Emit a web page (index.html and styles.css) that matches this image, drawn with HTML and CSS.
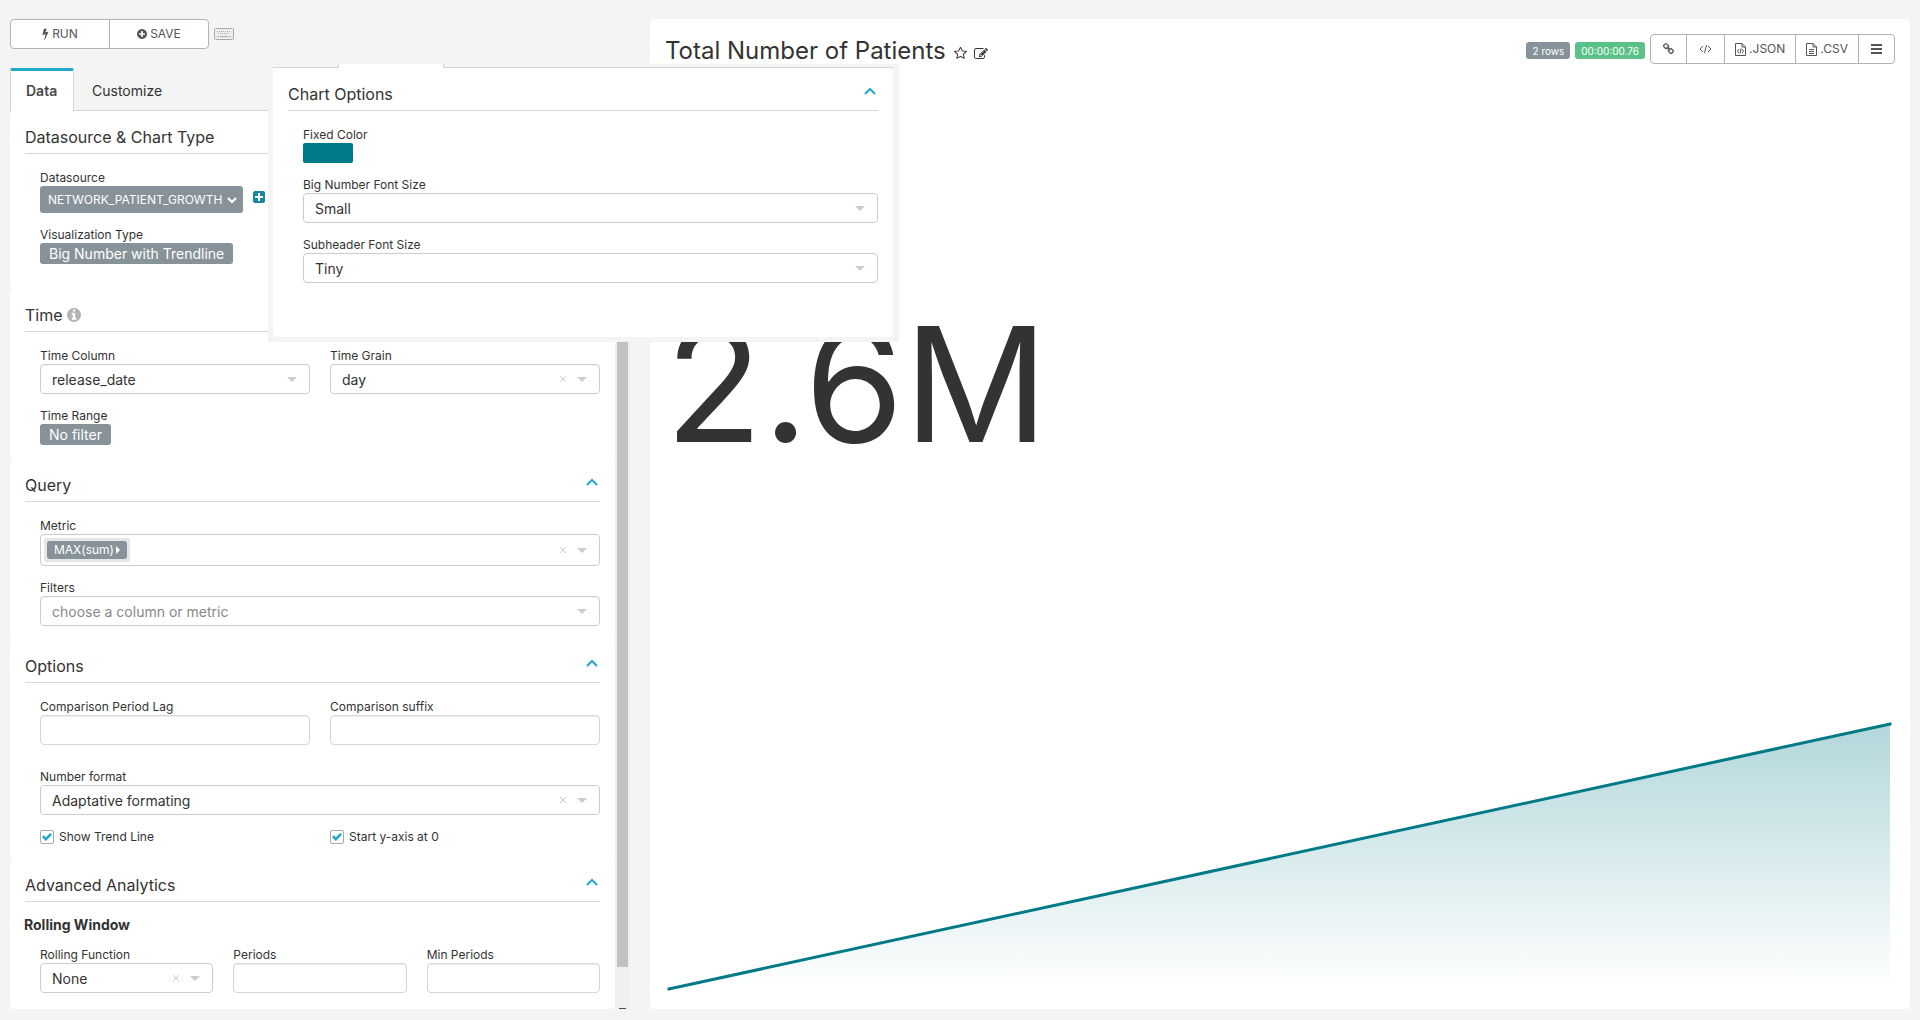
FILE: index.html
```html
<!DOCTYPE html>
<html lang="en">
<head>
<meta charset="utf-8">
<title>Total Number of Patients</title>
<link rel="stylesheet" href="styles.css">
</head>
<body>
<svg class="sprite" aria-hidden="true">
  <symbol id="i-up" viewBox="0 0 12 8"><path d="M1 7l5-5 5 5" fill="none" stroke="currentColor" stroke-width="2"/></symbol>
  <symbol id="i-x" viewBox="0 0 8 8"><path d="M1 1l6 6M7 1l-6 6" fill="none" stroke="currentColor" stroke-width="1"/></symbol>
</svg>
<div class="explore">
  <aside class="side">
    <div class="actions">
      <div class="btn-group">
        <button class="btn btn-wide" type="button"><svg width="7" height="12" viewBox="384 0 1024 1792"><path d="M1333 566q18 20 7 44l-540 1157q-13 25-42 25-4 0-14-2-17-5-25.500-19t-4.500-30l197-808-406 101q-4 1-12 1-18 0-31-11-18-15-13-39l201-825q4-14 16-23t28-9h328q19 0 32 12.500t13 29.500q0 8-5 18l-171 463 396-98q8-2 12-2 19 0 34 15z"/></svg>RUN</button>
        <button class="btn btn-wide" type="button"><svg width="10" height="12" viewBox="128 128 1536 1536"><path d="M1344 960v-128q0-26-19-45t-45-19h-256v-256q0-26-19-45t-45-19h-128q-26 0-45 19t-19 45v256h-256q-26 0-45 19t-19 45v128q0 26 19 45t45 19h256v256q0 26 19 45t45 19h128q26 0 45-19t19-45v-256h256q26 0 45-19t19-45zm320-64q0 209-103 385.500t-279.500 279.500-385.500 103-385.500-103-279.500-279.500-103-385.500 103-385.500 279.500-279.500 385.500-103 385.500 103 279.500 279.500 103 385.500z"/></svg>SAVE</button>
      </div>
      <svg class="keyboard" width="20" height="12" viewBox="0 0 20 12" aria-label="Keyboard shortcuts"><rect x=".5" y=".5" width="19" height="11" rx="1" fill="#eee" stroke="#aaa"/><path d="M3 3.500h14M4 5.500h12" stroke="#aaa" stroke-dasharray="1 1"/><path d="M3 8.500h2M6 8.500h8M15 8.500h2" stroke="#aaa"/></svg>
    </div>
    <nav class="tabs">
      <a class="tab active" href="#data">Data</a>
      <a class="tab" href="#customize">Customize</a>
    </nav>
    <div class="scroller">
      <form class="panels">
        <section class="panel panel-source">
          <header class="panel-head"><h2>Datasource &amp; Chart Type</h2></header>
          <div class="fields">
            <div class="field">
              <span class="label">Datasource</span>
              <div class="source-row">
                <button class="chip chip-source" type="button">NETWORK_PATIENT_GROWTH<svg width="10" height="8" viewBox="0 0 10 8"><path d="M1 2l4 4 4-4" fill="none" stroke="#fff" stroke-width="2.200"/></svg></button>
                <button class="plus" type="button" aria-label="Expand datasource"><svg width="12" height="12" viewBox="0 0 12 12"><rect width="12" height="12" rx="2" fill="#1a85a0"/><path d="M6 2v8M2 6h8" stroke="#fff" stroke-width="2"/></svg></button>
              </div>
            </div>
            <div class="field">
              <span class="label">Visualization Type</span>
              <button class="chip" type="button">Big Number with Trendline</button>
            </div>
          </div>
        </section>

        <section class="panel">
          <header class="panel-head"><h2>Time</h2><svg class="info" viewBox="128 128 1536 1536"><path d="M1152 1376v-160q0-14-9-23t-23-9h-96v-512q0-14-9-23t-23-9h-320q-14 0-23 9t-9 23v160q0 14 9 23t23 9h96v320h-96q-14 0-23 9t-9 23v160q0 14 9 23t23 9h448q14 0 23-9t9-23zm-128-896v-160q0-14-9-23t-23-9h-192q-14 0-23 9t-9 23v160q0 14 9 23t23 9h192q14 0 23-9t9-23zm640 416q0 209-103 385.500t-279.500 279.500-385.500 103-385.500-103-279.500-279.500-103-385.500 103-385.500 279.500-279.500 385.500-103 385.500 103 279.500 279.500 103 385.500z"/></svg></header>
          <div class="fields">
            <div class="row">
              <div class="field"><label class="label" for="time-column">Time Column</label>
                <div class="pick"><select id="time-column"><option>release_date</option></select></div></div>
              <div class="field"><label class="label" for="time-grain">Time Grain</label>
                <div class="pick"><select id="time-grain"><option>day</option></select><button class="clear" type="button" aria-label="Clear"><svg width="8" height="8"><use href="#i-x"/></svg></button></div></div>
            </div>
            <div class="field">
              <span class="label">Time Range</span>
              <button class="chip" type="button">No filter</button>
            </div>
          </div>
        </section>

        <section class="panel">
          <header class="panel-head"><h2>Query</h2><button class="fold" type="button" aria-label="Collapse"><svg width="12" height="8"><use href="#i-up"/></svg></button></header>
          <div class="fields">
            <div class="field"><span class="label">Metric</span>
              <div class="pick tags"><span class="tag"><button class="tag-btn" type="button">MAX(sum)<svg width="4" height="8" viewBox="0 0 4 8"><path d="M0 0l4 4-4 4z" fill="#fff"/></svg></button></span><button class="clear" type="button" aria-label="Clear"><svg width="8" height="8"><use href="#i-x"/></svg></button></div></div>
            <div class="field"><label class="label" for="filters">Filters</label>
              <div class="pick"><select class="empty" id="filters"><option>choose a column or metric</option></select></div></div>
          </div>
        </section>

        <section class="panel panel-options">
          <header class="panel-head"><h2>Options</h2><button class="fold" type="button" aria-label="Collapse"><svg width="12" height="8"><use href="#i-up"/></svg></button></header>
          <div class="fields">
            <div class="row row-loose">
              <div class="field"><label class="label" for="lag">Comparison Period Lag</label><input class="text" id="lag" type="text"></div>
              <div class="field"><label class="label" for="suffix">Comparison suffix</label><input class="text" id="suffix" type="text"></div>
            </div>
            <div class="field"><label class="label" for="format">Number format</label>
              <div class="pick"><select id="format"><option>Adaptative formating</option></select><button class="clear" type="button" aria-label="Clear"><svg width="8" height="8"><use href="#i-x"/></svg></button></div></div>
            <div class="row">
              <label class="check"><input type="checkbox" checked>Show Trend Line</label>
              <label class="check"><input type="checkbox" checked>Start y-axis at 0</label>
            </div>
          </div>
        </section>

        <section class="panel panel-last">
          <header class="panel-head"><h2>Advanced Analytics</h2><button class="fold" type="button" aria-label="Collapse"><svg width="12" height="8"><use href="#i-up"/></svg></button></header>
          <h3>Rolling Window</h3>
          <div class="fields fields-sub">
            <div class="row">
              <div class="field"><label class="label" for="rolling">Rolling Function</label>
                <div class="pick"><select id="rolling"><option>None</option></select><button class="clear" type="button" aria-label="Clear"><svg width="8" height="8"><use href="#i-x"/></svg></button></div></div>
              <div class="field"><label class="label" for="periods">Periods</label><input class="text" id="periods" type="text"></div>
              <div class="field"><label class="label" for="min-periods">Min Periods</label><input class="text" id="min-periods" type="text"></div>
            </div>
          </div>
        </section>
      </form>
      <div class="track"><div class="thumb"></div><div class="track-end"></div></div>
    </div>
  </aside>

  <main class="main">
    <div class="chart-card">
      <header class="chart-head">
        <h1>Total Number of Patients</h1>
        <button class="icon-btn" type="button" aria-label="Favorite"><svg width="13" height="13" viewBox="64 128 1664 1600"><path d="M1201 1004l306-297-422-62-189-382-189 382-422 62 306 297-73 421 378-199 377 199zm527-357q0 22-26 48l-363 354 86 500q1 7 1 20 0 50-41 50-19 0-40-12l-449-236-449 236q-22 12-40 12-21 0-31.500-14.500t-10.500-35.500q0-6 2-20l86-500-364-354q-25-27-25-48 0-37 56-46l502-73 225-455q19-41 49-41t49 41l225 455 502 73q56 9 56 46z"/></svg></button>
        <button class="icon-btn" type="button" aria-label="Edit"><svg width="14" height="14" viewBox="0 0 1792 1792"><path d="M888 1184l116-116-152-152-116 116v56h96v96h56zm440-720q-16-16-33 1l-350 350q-17 17-1 33t33-1l350-350q17-17 1-33zm80 594v190q0 119-84.500 203.500t-203.500 84.500h-832q-119 0-203.500-84.500t-84.500-203.500v-832q0-119 84.500-203.500t203.500-84.500h832q63 0 117 25 15 7 18 23 3 17-9 29l-49 49q-14 14-32 8-23-6-45-6h-832q-66 0-113 47t-47 113v832q0 66 47 113t113 47h832q66 0 113-47t47-113v-126q0-13 9-22l64-64q15-15 35-7t20 29zm-96-738l288 288-672 672h-288v-288zm444 132l-92 92-288-288 92-92q28-28 68-28t68 28l152 152q28 28 28 68t-28 68z"/></svg></button>
        <div class="chart-tools">
          <span class="badge">2 rows</span>
          <span class="badge badge-ok">00:00:00.76</span>
          <div class="btn-group">
            <button class="btn btn-icon" type="button" aria-label="Link"><svg width="11" height="12" viewBox="80 80 1632 1632"><path d="M1520 1216q0-40-28-68l-208-208q-28-28-68-28-42 0-72 32 3 3 19 18.500t21.500 21.500 15 19 13 25.500 3.500 27.500q0 40-28 68t-68 28q-15 0-27.500-3.500t-25.500-13-19-15-21.500-21.500-18.500-19q-33 31-33 73 0 40 28 68l206 207q27 27 68 27 40 0 68-26l147-146q28-28 28-67zm-703-705q0-40-28-68l-206-207q-28-28-68-28-39 0-68 27l-147 146q-28 28-28 67 0 40 28 68l208 208q27 27 68 27 42 0 72-31-3-3-19-18.500t-21.500-21.500-15-19-13-25.500-3.500-27.500q0-40 28-68t68-28q15 0 27.500 3.500t25.500 13 19 15 21.500 21.500 18.500 19q33-31 33-73zm895 705q0 120-85 203l-147 146q-83 83-203 83-121 0-204-85l-206-207q-83-83-83-203 0-123 88-209l-88-88q-86 88-208 88-120 0-204-84l-208-208q-84-84-84-204t85-203l147-146q83-83 203-83 121 0 204 85l206 207q83 83 83 203 0 123-88 209l88 88q86-88 208-88 120 0 204 84l208 208q84 84 84 204z"/></svg></button>
            <button class="btn btn-icon" type="button" aria-label="Embed"><svg width="13" height="10" viewBox="0 0 13 10"><path d="M4 2L1 5l3 3M9 2l3 3-3 3M7.500 1l-2 8" fill="none" stroke="currentColor"/></svg></button>
            <button class="btn" type="button"><svg width="11" height="13" viewBox="0 0 11 13"><path d="M.5.5h6.500l3.500 3.500v8.500h-10zM7 .5v3.500h3.500M4 6L2.500 8 4 10M7 6l1.500 2L7 10M6 5.500l-1 5" fill="none" stroke="currentColor"/></svg>.JSON</button>
            <button class="btn" type="button"><svg width="11" height="13" viewBox="0 0 11 13"><path d="M.5.5h6.500l3.500 3.500v8.500h-10zM7 .5v3.500h3.500M3 6.500h5M3 8.500h5M3 10.500h5" fill="none" stroke="currentColor"/></svg>.CSV</button>
            <button class="btn btn-icon" type="button" aria-label="Menu"><svg width="11" height="10" viewBox="0 0 11 10"><path d="M0 1h11M0 5h11M0 9h11" stroke="currentColor" stroke-width="2"/></svg></button>
          </div>
        </div>
      </header>
      <div class="big-number">2.6M</div>
      <svg class="trend" viewBox="0 0 1222 265" preserveAspectRatio="none" role="img" aria-label="Trend line">
        <defs><linearGradient id="fade" x1="0" y1="0" x2="0" y2="1"><stop offset="0" stop-color="#007a87" stop-opacity=".3"/><stop offset="1" stop-color="#007a87" stop-opacity="0"/></linearGradient></defs>
        <path d="M0 265L1222 0V265z" fill="url(#fade)"/>
        <path d="M0 265L1222 0" fill="none" stroke="#007a87" stroke-width="3" stroke-linecap="square" vector-effect="non-scaling-stroke"/>
      </svg>
    </div>
  </main>

  <div class="popup">
    <div class="popup-tabs"><span class="popup-tab"></span></div>
    <section class="panel popup-panel">
      <header class="panel-head"><h2>Chart Options</h2><button class="fold" type="button" aria-label="Collapse"><svg width="12" height="8"><use href="#i-up"/></svg></button></header>
      <div class="fields">
        <div class="field"><span class="label">Fixed Color</span><button class="swatch" type="button" aria-label="Fixed Color"></button></div>
        <div class="field"><label class="label" for="big-size">Big Number Font Size</label><div class="pick"><select id="big-size"><option>Small</option></select></div></div>
        <div class="field"><label class="label" for="sub-size">Subheader Font Size</label><div class="pick"><select id="sub-size"><option>Tiny</option></select></div></div>
      </div>
    </section>
  </div>
</div>
</body>
</html>
```
FILE: styles.css
```css
* { box-sizing: border-box; }

body {
  margin: 0;
  background: #f4f4f4;
  color: #333;
  font: 14px/20px Inter, "Liberation Sans", sans-serif;
}

button, select, input { font: inherit; color: inherit; }
button { margin: 0; padding: 0; border: 0; background: none; cursor: pointer; }
h1, h2, h3 { margin: 0; font-weight: 400; }
svg { display: block; flex: none; fill: currentColor; }
.sprite { position: absolute; width: 0; height: 0; }

.explore {
  position: relative;
  display: grid;
  grid-template-columns: minmax(0, 1fr) minmax(0, 2fr);
  height: 100vh;
  padding: 19px 0 11px;
}
.side, .main {
  display: flex;
  flex-direction: column;
  min-height: 0;
  padding: 0 10px;
}

/* Buttons */
.actions { display: flex; align-items: center; gap: 5px; }
.btn-group { display: flex; }
.btn {
  display: flex;
  align-items: center;
  justify-content: center;
  gap: 3px;
  height: 30px;
  padding: 0 10px;
  border: 1px solid #b3b3b3;
  background: #fff;
  color: #555;
  font-size: 12px;
}
.btn + .btn { margin-left: -1px; }
.btn:first-child { border-radius: 4px 0 0 4px; }
.btn:last-child { border-radius: 0 4px 4px 0; }
.btn-wide { width: 100px; }
.btn-icon { padding: 0 12px; }

/* Tabs */
.tabs {
  display: flex;
  gap: 2px;
  margin-top: 19px;
  border-bottom: 1px solid #cfd8dc;
}
.tab {
  height: 42px;
  padding: 3px 15px 0;
  border: 1px solid transparent;
  border-bottom: 0;
  color: #333;
  line-height: 38px;
  text-decoration: none;
}
.tab.active {
  min-width: 64px;
  height: 43px;
  margin-bottom: -1px;
  padding-top: 1px;
  border-color: #cfd8dc;
  border-top: 3px solid #20a7c9;
  border-radius: 2px 2px 0 0;
  background: #fff;
  color: #484848;
  font-weight: 600;
}

/* Control panels */
.scroller { display: flex; flex: 1; min-height: 0; overflow: hidden; }
.panels { display: flex; flex: 1; flex-direction: column; min-width: 0; }
.panel { flex: none; padding: 0 15px 14px; border-radius: 4px; background: #fff; }
.panel-source { padding-bottom: 25px; }
.panel-options { padding-bottom: 15px; }
.panel-last { flex: 1 0 auto; }
.panel-head {
  display: flex;
  align-items: center;
  gap: 4px;
  height: 43px;
  padding: 15px 0 5px;
  border-bottom: 1px solid #cfd8dc;
}
.panel-head h2 { font-size: 16px; line-height: 22px; }
.info { width: 14px; height: 14px; color: #b3b3b3; }
.fold { align-self: flex-start; margin-left: auto; padding: 4px 2px; color: #20a7c9; }
.fields { display: flex; flex-direction: column; gap: 13px; padding: 15px 0 0 15px; }
.field { flex: 1; min-width: 0; }
.row { display: flex; gap: 20px; }
.row-loose { margin-bottom: 10px; }
.label { display: block; font-size: 12px; line-height: 17px; }
h3 { margin: 13px 0 0 -1px; font-size: 14px; font-weight: 700; line-height: 20px; }
.fields-sub { padding-top: 11px; }

.chip {
  display: flex;
  align-items: center;
  height: 21px;
  padding: 0 9px;
  border-radius: 3px;
  background: #879399;
  color: #fff;
}
.source-row { display: flex; gap: 10px; }
.chip-source { gap: 5px; height: 27px; padding: 0 6px 0 8px; font-size: 12px; }
.plus { align-self: flex-start; padding-top: 5px; }

.pick { position: relative; }
.pick::after {
  content: "";
  position: absolute;
  top: 13px;
  right: 13px;
  border: 5px solid transparent;
  border-top-color: #ccc;
  border-bottom: 0;
  pointer-events: none;
}
select, .text {
  display: block;
  appearance: none;
  width: 100%;
  height: 30px;
  padding: 2px 10px 0 11px;
  border: 1px solid #ccc;
  border-radius: 4px;
  background: #fff;
}
.text { border-color: #cfd8dc; box-shadow: inset 0 1px 1px rgba(0, 0, 0, .07); }
.empty { color: #888; }
.clear { position: absolute; top: 11px; right: 33px; color: #ccc; }
.tags { display: flex; align-items: center; height: 32px; padding: 0 3px; border: 1px solid #ccc; border-radius: 4px; }
.tags .clear { right: 32px; }
.tags::after { right: 12px; }
.tag { padding: 3px; border-radius: 2px; background: #e6e6e6; }
.tag-btn {
  display: flex;
  align-items: center;
  gap: 2px;
  height: 18px;
  padding: 0 7px;
  border-radius: 3px;
  background: #879399;
  color: #fff;
  font-size: 12px;
}

.check { display: flex; flex: 1; align-items: center; gap: 5px; margin-top: 2px; font-size: 12px; line-height: 14px; }
.check input {
  appearance: none;
  width: 14px;
  height: 14px;
  margin: 0;
  border: 1px solid #aaa;
  border-radius: 2px;
  background: #fff;
}
.check input:checked::before {
  content: "";
  display: block;
  width: 10px;
  height: 8px;
  margin: 2px 1px;
  background: #20a7c9;
  clip-path: polygon(0 50%, 18% 28%, 38% 52%, 82% 0, 100% 22%, 38% 100%);
}

/* Scroll track */
.track { display: flex; flex-direction: column; align-items: center; width: 15px; background: #f0f0f0; }
.thumb { flex: 1; width: 11px; background: #c1c1c1; }
.track-end { width: 7px; height: 42px; border-bottom: 1px solid #505050; }

/* Chart */
.chart-card {
  display: flex;
  flex: 1;
  flex-direction: column;
  padding: 15px 15px 20px;
  border-radius: 4px;
  background: #fff;
}
.chart-head { display: flex; align-items: center; }
.chart-head h1 { margin-right: 8px; font-size: 24px; line-height: 34px; }
.icon-btn { margin: 5px 7px 0 0; }
.chart-tools { display: flex; align-items: center; align-self: flex-start; gap: 5px; margin-left: auto; }
.badge {
  height: 17px;
  margin-top: 3px;
  padding: 0 6px;
  border-radius: 3px;
  background: #879399;
  color: #fff;
  font-size: 10px;
  line-height: 18px;
}
.badge-ok { background: #5ac189; }
.big-number { margin: auto 0; padding-bottom: 24px; font-size: 160px; line-height: 160px; }
.trend { width: auto; height: 265px; margin: 0 5px 0 4px; overflow: visible; }

/* Overlay with chart options */
.popup {
  position: absolute;
  top: 64px;
  left: 268px;
  width: 631px;
  padding: 0 6px 5px 5px;
  background: #f4f4f4;
}
.popup-tabs { display: flex; height: 4px; padding-left: 65px; border-bottom: 1px solid #cfd8dc; }
.popup-tab { width: 106px; height: 4px; border: solid #cfd8dc; border-width: 0 1px; background: #fff; }
.popup-panel { padding-bottom: 54px; }
.swatch { display: block; width: 50px; height: 20px; border-radius: 2px; background: #007a87; }
```
